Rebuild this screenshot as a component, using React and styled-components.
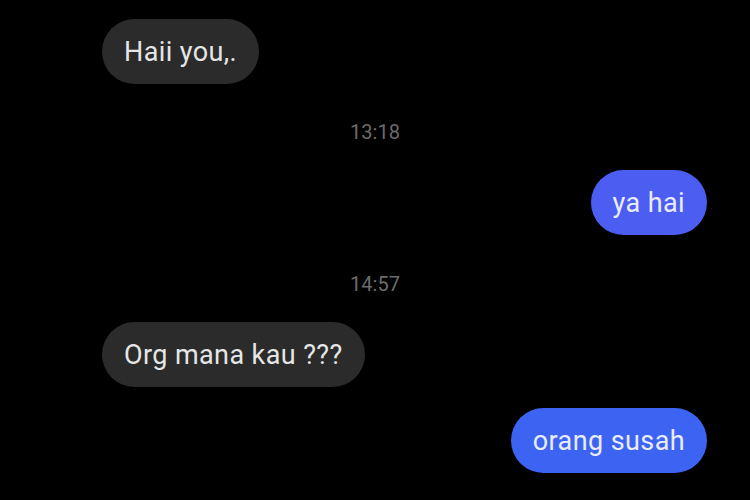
import React from "react";
import styled, { createGlobalStyle } from "styled-components";

const Global = createGlobalStyle`
  html, body { margin: 0; padding: 0; background: #000; }
  body { font-family: Roboto, "Liberation Sans", Arial, sans-serif; }
  #root { width: 750px; height: 500px; overflow: hidden; }
`;

const Screen = styled.div`
  width: 750px;
  height: 500px;
  background: #000;
  display: flex;
  flex-direction: column;
  padding-top: 19px;
  box-sizing: border-box;
`;

const Row = styled.div`
  display: flex;
  justify-content: ${(p) => (p.$out ? "flex-end" : "flex-start")};
  padding: ${(p) => (p.$out ? "0 43px 0 0" : "0 0 0 102px")};
  margin-top: ${(p) => p.$mt || 0}px;
`;

const Bubble = styled.div`
  height: 65px;
  border-radius: 33px;
  padding: 0 22px;
  display: flex;
  align-items: center;
  font-size: 27px;
  letter-spacing: 0.4px;
  color: ${(p) => (p.$out ? "#e9ecfb" : "#e6e6e6")};
  background: ${(p) => p.$bg || "#2b2b2b"};
  white-space: nowrap;
`;

const Stamp = styled.div`
  text-align: center;
  font-size: 20px;
  line-height: 24px;
  color: #6b6b6b;
  margin-top: ${(p) => p.$mt}px;
`;

export default function App() {
  return (
    <>
      <Global />
      <Screen>
        <Row>
          <Bubble>Haii you,.</Bubble>
        </Row>
        <Stamp $mt={36}>13:18</Stamp>
        <Row $out $mt={26}>
          <Bubble $out $bg="#4c5df2">ya hai</Bubble>
        </Row>
        <Stamp $mt={37}>14:57</Stamp>
        <Row $mt={26}>
          <Bubble>Org mana kau ???</Bubble>
        </Row>
        <Row $out $mt={21}>
          <Bubble $out $bg="#3c63f1">orang susah</Bubble>
        </Row>
      </Screen>
    </>
  );
}
